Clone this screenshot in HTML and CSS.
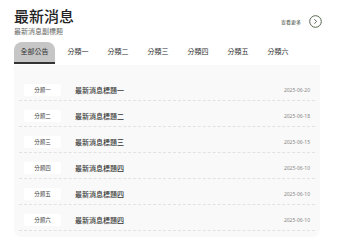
FILE: index.html
```html
<!DOCTYPE html>
<html lang="zh-Hant">
<head>
    <meta charset="UTF-8">
    <meta name="viewport" content="width=device-width, initial-scale=1.0">
    <title>最新消息</title>
    <link rel="stylesheet" href="styles.css">
</head>
<body>
    <section class="news">
        <header class="news-head">
            <div class="head-text">
                <h1 class="news-title">最新消息</h1>
                <p class="news-sub">最新消息副標題</p>
            </div>
            <a class="more" href="#">
                <span>查看更多</span>
                <svg class="more-icon" width="13" height="13" viewBox="0 0 13 13">
                    <circle cx="6.5" cy="6.5" r="5.8" fill="none" stroke="#55664f" stroke-width="1"/>
                    <path d="M5.4 4.3 L7.6 6.5 L5.4 8.7" fill="none" stroke="#55664f" stroke-width="1"/>
                </svg>
            </a>
        </header>

        <nav class="tabs">
            <span class="tab active">全部公告</span>
            <span class="tab">分類一</span>
            <span class="tab">分類二</span>
            <span class="tab">分類三</span>
            <span class="tab">分類四</span>
            <span class="tab">分類五</span>
            <span class="tab">分類六</span>
        </nav>

        <ul class="news-list">
            <li class="news-item">
                <span class="tag">分類一</span>
                <span class="item-title">最新消息標題一</span>
                <span class="item-date">2025-06-20</span>
            </li>
            <li class="news-item">
                <span class="tag">分類二</span>
                <span class="item-title">最新消息標題二</span>
                <span class="item-date">2025-06-18</span>
            </li>
            <li class="news-item">
                <span class="tag">分類三</span>
                <span class="item-title">最新消息標題三</span>
                <span class="item-date">2025-06-15</span>
            </li>
            <li class="news-item">
                <span class="tag">分類四</span>
                <span class="item-title">最新消息標題四</span>
                <span class="item-date">2025-06-10</span>
            </li>
            <li class="news-item">
                <span class="tag">分類五</span>
                <span class="item-title">最新消息標題四</span>
                <span class="item-date">2025-06-10</span>
            </li>
            <li class="news-item">
                <span class="tag">分類六</span>
                <span class="item-title">最新消息標題四</span>
                <span class="item-date">2025-06-10</span>
            </li>
        </ul>
    </section>
</body>
</html>
```

FILE: styles.css
```css
* {
    margin: 0;
    padding: 0;
    box-sizing: border-box;
}

body {
    font-family: 'Noto Sans', 'Noto Sans CJK TC', sans-serif;
    background: #ffffff;
    color: #333333;
}

.news {
    padding: 6px 20px 0 14px;
}

.news-head {
    display: flex;
    justify-content: space-between;
    align-items: center;
}

.news-title {
    font-size: 15px;
    line-height: 20px;
    font-weight: 500;
    color: #222222;
}

.news-sub {
    font-size: 7px;
    line-height: 10px;
    color: #666666;
    margin-top: 1px;
}

.more {
    display: flex;
    align-items: center;
    gap: 8px;
    font-size: 5px;
    color: #3f4d3b;
    text-decoration: none;
    margin-right: -2px;
}

.more-icon {
    display: block;
}

.tabs {
    display: flex;
    gap: 6px;
    margin-top: 5px;
}

.tab {
    font-size: 7px;
    line-height: 20px;
    padding: 0 6.5px;
    border-bottom: 2px solid transparent;
    border-radius: 8px 8px 0 0;
    color: #333333;
}

.tab.active {
    background: #c6c6c6;
    border-bottom-color: #333333;
}

.news-list {
    list-style: none;
    background: #f9f9f9;
    border-radius: 0 0 8px 8px;
    padding: 10px 5px 6px;
    margin-top: 1px;
}

.news-item {
    display: flex;
    align-items: center;
    padding: 9px 5px 4px;
    border-bottom: 1px dashed #e2e2e2;
}

.tag {
    width: 37px;
    height: 12px;
    line-height: 12px;
    background: #ffffff;
    border-radius: 2px;
    text-align: center;
    font-size: 5.5px;
    color: #444444;
}

.item-title {
    flex: 1;
    margin-left: 14px;
    font-size: 7px;
    font-weight: 500;
    color: #333333;
}

.item-date {
    font-size: 5px;
    color: #888888;
}
```
